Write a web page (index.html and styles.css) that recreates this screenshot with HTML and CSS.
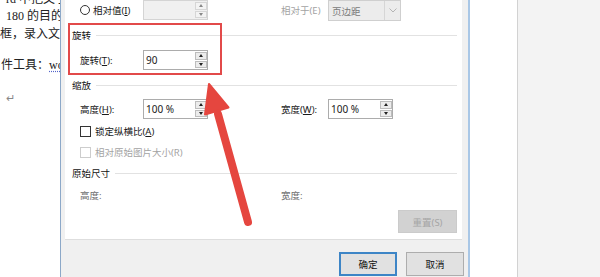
FILE: index.html
```html
<!DOCTYPE html>
<html lang="zh-CN">
<head>
  <meta charset="UTF-8" />
  <meta name="viewport" content="width=device-width, initial-scale=1.0"/>
  <title>布局 - 大小</title>
  <link rel="stylesheet" href="styles.css">
</head>
<body>
  <!-- document page behind the dialog -->
  <div class="doc doc-left">
    <div class="line l1">rd 中把文字</div>
    <div class="line l2">180 的目的</div>
    <div class="line l3">框，录入文</div>
    <div class="line l4">件工具：<span class="squiggle">wo</span></div>
    <div class="line l5">↵</div>
  </div>

  <div class="dialog">
    <div class="panel">
      <div class="row row-top">
        <label class="label"><span class="radio"></span>相对值(<u>I</u>)</label>
        <div class="field is-disabled">
          <span class="field-text"></span>
          <span class="spin"><span class="spin-btn up"></span><span class="spin-btn down"></span></span>
        </div>
        <span class="label2 muted">相对于(E)</span>
        <div class="select">
          <span class="select-text">页边距</span>
          <span class="select-arrow">
            <svg width="8" height="5" viewBox="0 0 8 5"><path d="M0.5 0.5 L4 4 L7.5 0.5" fill="none" stroke="#b4b4b4" stroke-width="1"/></svg>
          </span>
        </div>
      </div>

      <div class="group group-rot"><span>旋转</span><i class="rule"></i></div>
      <div class="row row-rot">
        <span class="label">旋转(<u>T</u>):</span>
        <div class="field">
          <span class="field-text">90</span>
          <span class="spin"><span class="spin-btn up"></span><span class="spin-btn down"></span></span>
        </div>
      </div>

      <div class="group group-scale"><span>缩放</span><i class="rule"></i></div>
      <div class="row row-size">
        <span class="label">高度(<u>H</u>):</span>
        <div class="field">
          <span class="field-text">100 %</span>
          <span class="spin"><span class="spin-btn up"></span><span class="spin-btn down"></span></span>
        </div>
        <span class="label2">宽度(<u>W</u>):</span>
        <div class="field">
          <span class="field-text">100 %</span>
          <span class="spin"><span class="spin-btn up"></span><span class="spin-btn down"></span></span>
        </div>
      </div>
      <div class="check check-lock"><span class="box"></span>锁定纵横比(<u>A</u>)</div>
      <div class="check check-orig muted"><span class="box"></span>相对原始图片大小(R)</div>

      <div class="group group-orig"><span>原始尺寸</span><i class="rule"></i></div>
      <div class="row row-orig">
        <span class="label dim">高度:</span>
        <span class="spacer"></span>
        <span class="label2 dim">宽度:</span>
      </div>
      <div class="reset-row"><button class="btn btn-off">重置(S)</button></div>

      <div class="highlight"></div>
    </div>

    <div class="footer">
      <button class="btn btn-default">确定</button>
      <button class="btn">取消</button>
    </div>
  </div>

  <div class="doc doc-right"></div>
  <div class="sidebar"></div>

  <svg class="arrow" width="600" height="277" viewBox="0 0 600 277">
    <line x1="248" y1="222" x2="218" y2="114" stroke="#e5463f" stroke-width="8" stroke-linecap="round"/>
    <polygon points="209,84 228.5,107.5 205,114.5" fill="#e5463f" stroke="#e5463f" stroke-width="2" stroke-linejoin="round"/>
  </svg>
</body>
</html>
```

FILE: styles.css
```css
body {
  margin: 0;
  width: 600px;
  height: 277px;
  overflow: hidden;
  display: flex;
  position: relative;
  font-family: 'Noto Sans', 'Noto Sans CJK SC', sans-serif;
  font-size: 9.5px;
  color: #1a1a1a;
  background: #fff;
}

/* document page */
.doc {
  background: #fff;
  overflow: hidden;
}

.doc-left {
  width: 60px;
  font-family: 'Liberation Serif', 'Noto Sans CJK SC', serif;
  font-size: 12px;
  color: #222;
}

.line {
  white-space: nowrap;
  line-height: 18px;
  height: 18px;
}

.l1 { margin-top: -10px; padding-left: 6px; }
.l2 { margin-top: -1px; padding-left: 6px; }
.l3 { padding-left: 0; }
.l4 { margin-top: 13px; padding-left: 1px; }
.l5 { margin-top: 15px; padding-left: 6px; color: #888; font-size: 11px; }

.squiggle {
  text-decoration: underline dotted #5364c9;
  text-underline-offset: 2px;
}

.doc-right {
  width: 47px;
}

.sidebar {
  flex: 1;
  background: #f3f3f3;
  border-left: 1px solid #d2d2d2;
}

/* dialog */
.dialog {
  width: 407px;
  flex-shrink: 0;
  background: #f0f0f0;
  border-left: 1px solid #8ca8c8;
  border-right: 2px solid #a9c7e6;
  display: flex;
  flex-direction: column;
}

.panel {
  position: relative;
  margin: 0 6px 0 4px;
  height: 240px;
  box-sizing: border-box;
  background: #fff;
  border-bottom: 1px solid #dedede;
  padding-right: 5px;
}

.row {
  display: flex;
  align-items: center;
  padding-left: 15px;
  height: 20px;
}

.label {
  width: 63px;
  display: flex;
  align-items: center;
  white-space: nowrap;
}

.label2 {
  margin-left: 73px;
  width: 47px;
  white-space: nowrap;
}

.spacer {
  width: 65px;
}

.muted { color: #a3a3a3; }
.dim { color: #6f6f6f; }

.radio {
  width: 10px;
  height: 10px;
  box-sizing: border-box;
  border: 1px solid #333;
  border-radius: 50%;
  margin-right: 3px;
  flex-shrink: 0;
}

.field {
  width: 65px;
  height: 20px;
  box-sizing: border-box;
  border: 1px solid #acacac;
  background: #fff;
  display: flex;
}

.field.is-disabled {
  background: #f0f0f0;
  border-color: #d4d4d4;
}

.field-text {
  flex: 1;
  padding-left: 2px;
  line-height: 18px;
  font-size: 10px;
}

.spin {
  width: 12px;
  display: flex;
  flex-direction: column;
  gap: 1px;
  padding: 1px 0 1px 1px;
}

.spin-btn {
  flex: 1;
  background: #ececec;
  border: 1px solid #bdbdbd;
  display: flex;
  align-items: center;
  justify-content: center;
}

.spin-btn::after {
  content: '';
  border-left: 2.5px solid transparent;
  border-right: 2.5px solid transparent;
}

.spin-btn.up::after { border-bottom: 3px solid #222; }
.spin-btn.down::after { border-top: 3px solid #222; }
.is-disabled .spin-btn { border-color: #d6d6d6; background: #f3f3f3; }
.is-disabled .spin-btn.up::after { border-bottom-color: #888; }
.is-disabled .spin-btn.down::after { border-top-color: #888; }

.select {
  width: 73px;
  height: 21px;
  box-sizing: border-box;
  border: 1px solid #cfcfcf;
  background: #ececec;
  display: flex;
  align-items: center;
  color: #7a7a7a;
  margin-top: 1px;
}

.select-text {
  flex: 1;
  padding-left: 3px;
}

.select-arrow {
  width: 15px;
  height: 100%;
  border-left: 1px solid #d6d6d6;
  display: flex;
  align-items: center;
  justify-content: center;
}

/* group headers */
.group {
  display: flex;
  align-items: center;
  height: 14px;
  padding-left: 7px;
  color: #111;
}

.rule {
  flex: 1;
  height: 1px;
  background: #e2e2e2;
  margin-left: 5px;
}

.group-rot { margin-top: 8px; }
.row-rot { margin-top: 8px; }
.group-scale { margin-top: 8px; }
.row-size { margin-top: 7px; }

.check {
  display: flex;
  align-items: center;
  height: 14px;
  padding-left: 15px;
}

.box {
  width: 9px;
  height: 9px;
  border: 1px solid #333;
  margin-right: 4px;
}

.check-lock { margin-top: 5px; }
.check-orig { margin-top: 7px; }
.check-orig .box { border-color: #cdcdcd; }

.group-orig { margin-top: 7px; }
.row-orig { margin-top: 8px; height: 14px; }

.reset-row {
  display: flex;
  justify-content: flex-end;
  margin-top: 8px;
}

/* buttons */
.btn {
  width: 58px;
  height: 24px;
  font: inherit;
  background: #e1e1e1;
  border: 1px solid #adadad;
  color: #111;
  padding: 0;
}

.btn-off {
  width: 59px;
  height: 23px;
  background: #d2d2d2;
  border-color: #cbcbcb;
  color: #a5a5a5;
}

.btn-default {
  border: 2px solid #3d85c6;
}

.footer {
  display: flex;
  justify-content: flex-end;
  gap: 9px;
  padding: 12px 4px 0 0;
}

/* annotations */
.highlight {
  position: absolute;
  left: 3px;
  top: 23px;
  width: 154px;
  height: 52px;
  box-sizing: border-box;
  border: 2px solid #e24a4a;
}

.arrow {
  position: absolute;
  left: 0;
  top: 0;
  pointer-events: none;
}
```
